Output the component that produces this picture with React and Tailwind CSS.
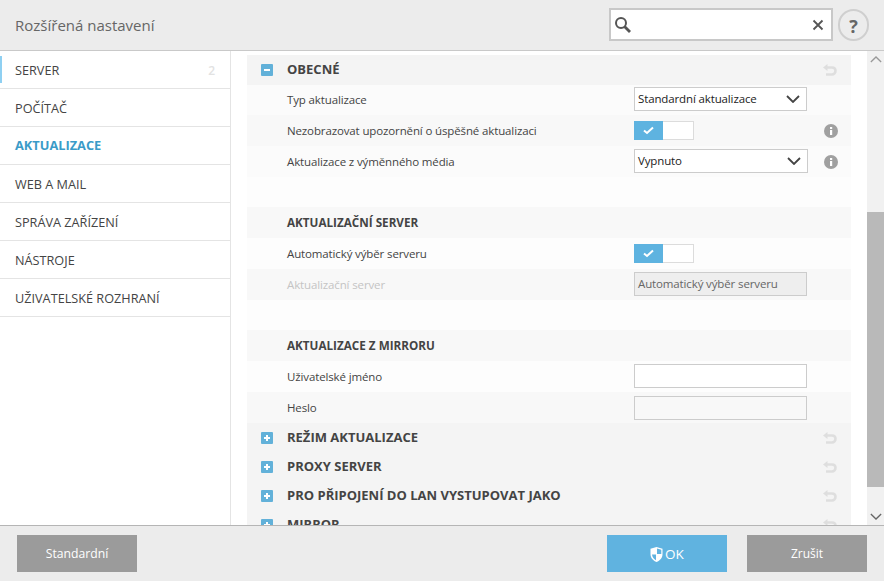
import React from "react";

const Undo = () => (
  <svg width="16" height="14" viewBox="0 0 16 14" className="shrink-0">
    <path d="M5.5 1 L1 4.5 L5.5 8 Z" fill="#dedede" />
    <path d="M4 4.5 H10 C12.5 4.5 13.5 6 13.5 7.8 C13.5 9.8 12 11.5 10 11.5 H4" fill="none" stroke="#dedede" strokeWidth="2.6" />
  </svg>
);

const Info = () => (
  <svg width="14" height="14" viewBox="0 0 14 14">
    <circle cx="7" cy="7" r="7" fill="#a0a0a0" />
    <rect x="6" y="6" width="2.2" height="5" fill="#fff" />
    <rect x="6" y="3" width="2.2" height="2" fill="#fff" />
  </svg>
);

const Chevron = ({ w = 14, h = 8, c = "#444", sw = 1.8, up }) => (
  <svg width={w} height={h} viewBox="0 0 14 8">
    <path d={up ? "M1 7 L7 1 L13 7" : "M1 1 L7 7 L13 1"} fill="none" stroke={c} strokeWidth={sw} />
  </svg>
);

const Box = ({ minus }) => (
  <svg width="12" height="12" viewBox="0 0 12 12" className="shrink-0">
    <rect width="12" height="12" rx="1" fill="#62b1d9" />
    <rect x="3" y="5" width="6" height="2" fill="#fff" />
    {!minus && <rect x="5" y="3" width="2" height="6" fill="#fff" />}
  </svg>
);

const Toggle = () => (
  <div className="flex w-[60px] h-[19px] border border-[#dcdcdc] bg-white">
    <div className="w-[29px] h-[19px] bg-[#5eb3e0] flex items-center justify-center -mt-px -ml-px">
      <svg width="11" height="9" viewBox="0 0 11 9">
        <path d="M1 4.5 L4 7 L10 1.5" fill="none" stroke="#fff" strokeWidth="2" />
      </svg>
    </div>
  </div>
);

const Select = ({ children, w = "w-[173px]" }) => (
  <div className={`${w} h-[24px] mb-[2px] border border-[#cccccc] bg-white flex items-center justify-between pl-[3px] pr-[6px] text-[11.5px] tracking-[-0.13px] text-[#222]`}>
    <span>{children}</span>
    <Chevron />
  </div>
);

const Input = ({ children, disabled, bg = "bg-white", shift = "mb-px" }) => (
  <div className={`w-[173px] h-[24px] ${shift} border border-[#cccccc] flex items-center pl-[3px] text-[11.5px] tracking-[-0.13px] text-[#666] ${disabled ? "bg-[#eeeeee]" : bg}`}>
    {children}
  </div>
);

const Row = ({ h, bg, label, disabled, control, info }) => (
  <div className={`flex items-center shrink-0 ${h} ${bg} pl-[40px]`}>
    <span className={`w-[347px] text-[11.5px] tracking-[-0.13px] ${disabled ? "text-[#c4c4c4]" : "text-[#444]"}`}>{label}</span>
    <div className="w-[190px] flex items-center">{control}</div>
    {info && <Info />}
  </div>
);

const Heading = ({ h, title, box, undo, small, bg = "bg-[#f4f4f4]" }) => (
  <div className={`flex items-center shrink-0 ${h} ${bg} pl-[14px] pr-[13px]`}>
    <div className="w-[26px] flex items-center">{box && <Box minus={box === "minus"} />}</div>
    <span className={`flex-1 font-bold text-[#444] ${small ? "text-[11.7px]" : "text-[13px]"}`}>{title}</span>
    {undo && <Undo />}
  </div>
);

const nav = [
  ["SERVER", "2"],
  ["POČÍTAČ"],
  ["AKTUALIZACE"],
  ["WEB A MAIL"],
  ["SPRÁVA ZAŘÍZENÍ"],
  ["NÁSTROJE"],
  ["UŽIVATELSKÉ ROZHRANÍ"],
];

export default function App() {
  return (
    <div className="w-[884px] h-[581px] flex flex-col overflow-hidden bg-white" style={{ fontFamily: '"Open Sans", sans-serif' }}>
      <header className="h-[51px] shrink-0 bg-[#ececec] border-b border-[#c9c9c9] flex items-center pl-[15px] pr-[15px]">
        <h1 className="flex-1 text-[15px] text-[#666] font-normal">Rozšířená nastavení</h1>
        <div className="w-[224px] h-[33px] mt-[-1px] border-2 border-[#c8c8c8] bg-white flex items-center justify-between pl-[3px] pr-[7px]">
          <svg width="18" height="18" viewBox="0 0 18 18">
            <circle cx="7" cy="7" r="5" fill="none" stroke="#555" strokeWidth="2" />
            <path d="M10.5 10.5 L16 16" stroke="#555" strokeWidth="2.8" />
          </svg>
          <svg width="12" height="12" viewBox="0 0 12 12">
            <path d="M1.5 1.5 L10.5 10.5 M10.5 1.5 L1.5 10.5" stroke="#555" strokeWidth="1.8" />
          </svg>
        </div>
        <div className="ml-[5px] w-[31px] h-[32px] pt-[2px] rounded-full border-2 border-[#cfcfcf] flex items-center justify-center text-[18px] font-bold text-[#666]">?</div>
      </header>

      <div className="flex-1 min-h-0 flex">
        <nav className="w-[231px] shrink-0 border-r border-[#e4e4e4]">
          {nav.map(([label, count], i) => (
            <div key={label} className="relative h-[38px] border-b border-[#e4e4e4] flex items-center pl-[15px] pr-[15px] justify-between">
              {i === 0 && <div className="absolute left-0 top-[5px] w-[2px] h-[27px] bg-[#8fd0f2]" />}
              <span className={i === 2 ? "text-[12.8px] font-bold text-[#3a9bc8]" : "text-[12.7px] text-[#444] pt-[3px]"}>{label}</span>
              {count && <span className="text-[12px] font-semibold text-[#e2e2e2] pt-[3px]">{count}</span>}
            </div>
          ))}
        </nav>

        <main className="flex-1 min-w-0 flex overflow-hidden pl-[16px]">
          <div className="w-[604px] pt-[4px] flex flex-col overflow-hidden">
            <Heading h="h-[30px]" title="OBECNÉ" box="minus" undo />
            <Row h="h-[30px]" bg="bg-[#fbfbfb]" label="Typ aktualizace" control={<Select>Standardní aktualizace</Select>} />
            <Row h="h-[31px]" bg="bg-[#f8f8f8]" label="Nezobrazovat upozornění o úspěšné aktualizaci" control={<Toggle />} info />
            <Row h="h-[31px]" bg="bg-[#fbfbfb]" label="Aktualizace z výměnného média" control={<Select w="w-[174px]">Vypnuto</Select>} info />
            <div className="h-[30px] shrink-0 bg-[#fdfdfd]" />
            <Heading h="h-[31px]" small title="AKTUALIZAČNÍ SERVER" bg="bg-[#f8f8f8]" />
            <Row h="h-[31px]" bg="bg-[#fdfdfd]" label="Automatický výběr serveru" control={<Toggle />} />
            <Row h="h-[31px]" bg="bg-[#f8f8f8]" label="Aktualizační server" disabled control={<Input disabled>Automatický výběr serveru</Input>} />
            <div className="h-[30px] shrink-0 bg-[#fdfdfd]" />
            <Heading h="h-[31px]" small title="AKTUALIZACE Z MIRRORU" bg="bg-[#f8f8f8]" />
            <Row h="h-[31px]" bg="bg-[#fdfdfd]" label="Uživatelské jméno" control={<Input />} />
            <Row h="h-[31px]" bg="bg-[#f8f8f8]" label="Heslo" control={<Input bg="bg-[#f8f8f8]" shift="mt-0" />} />
            <Heading h="h-[29px]" title="REŽIM AKTUALIZACE" box="plus" undo />
            <Heading h="h-[29px]" title="PROXY SERVER" box="plus" undo />
            <Heading h="h-[29px]" title="PRO PŘIPOJENÍ DO LAN VYSTUPOVAT JAKO" box="plus" undo />
            <Heading h="h-[29px]" title="MIRROR" box="plus" undo />
          </div>
          <div className="ml-[16px] w-[17px] shrink-0 flex flex-col items-center bg-[#f1f1f1]">
            <div className="h-[161px] w-full flex justify-center pt-[5px]">
              <Chevron up c="#999" w={12} h={7} sw={1.5} />
            </div>
            <div className="h-[275px] w-full bg-[#b9b9b9]" />
            <div className="flex-1 w-full flex justify-center items-start pt-[26px]">
              <Chevron c="#666" w={12} h={7} sw={1.5} />
            </div>
          </div>
        </main>
      </div>

      <footer className="h-[56px] shrink-0 bg-[#ececec] border-t border-[#b5b5b5] flex items-start pt-[9px] pl-[17px] pr-[17px]">
        <button className="w-[120px] h-[37px] pt-px bg-[#9b9b9b] text-white text-[12.2px]">Standardní</button>
        <button className="ml-auto w-[120px] h-[37px] pt-px bg-[#60b3e0] text-white text-[13.5px] flex items-center justify-center gap-[2px]">
          <svg width="13" height="15" viewBox="0 0 13 15">
            <path d="M6.5 0 L12.5 1.8 V7 C12.5 11 10 13.5 6.5 15 C3 13.5 0.5 11 0.5 7 V1.8 Z" fill="#fff" />
            <path d="M7 1.5 L11.3 2.8 V7 H7 Z M6 7.5 H2 C2.4 10.4 4 12.2 6 13.3 Z" fill="#60b3e0" />
          </svg>
          OK
        </button>
        <button className="ml-[20px] w-[120px] h-[37px] pt-px bg-[#9b9b9b] text-white text-[12px]">Zrušit</button>
      </footer>
    </div>
  );
}
